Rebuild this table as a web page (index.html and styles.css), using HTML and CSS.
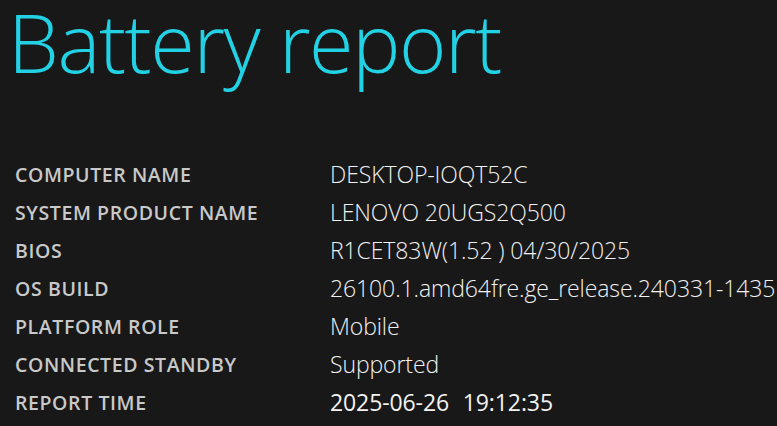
FILE: index.html
```html
<!DOCTYPE html>
<html lang="en">
<head>
    <meta charset="UTF-8">
    <meta name="viewport" content="width=device-width, initial-scale=1.0">
    <title>Battery report</title>
    <link rel="stylesheet" href="styles.css">
</head>
<body>
    <div class="report">
        <h1>Battery report</h1>

        <!-- System info -->
        <table class="info">
            <tr><td class="label">COMPUTER NAME</td><td class="value">DESKTOP-IOQT52C</td></tr>
            <tr><td class="label">SYSTEM PRODUCT NAME</td><td class="value">LENOVO 20UGS2Q500</td></tr>
            <tr><td class="label">BIOS</td><td class="value">R1CET83W(1.52 ) 04/30/2025</td></tr>
            <tr><td class="label">OS BUILD</td><td class="value">26100.1.amd64fre.ge_release.240331-1435</td></tr>
            <tr><td class="label">PLATFORM ROLE</td><td class="value">Mobile</td></tr>
            <tr><td class="label">CONNECTED STANDBY</td><td class="value">Supported</td></tr>
            <tr><td class="label">REPORT TIME</td><td class="value time">2025-06-26 &nbsp;19:12:35</td></tr>
        </table>
    </div>
</body>
</html>
```

FILE: styles.css
```css
body {
    margin: 0;
    background-color: #181818;
    color: #ffffff;
    font-family: 'Open Sans', 'Noto Sans', sans-serif;
    overflow: hidden;
}
.report {
    padding: 0 0 0 15px;
}
h1 {
    margin: 0 0 0 -7px;
    font-size: 81px;
    font-weight: 300;
    line-height: 84px;
    letter-spacing: -1.4px;
    color: #22d2e4;
}
.info {
    border-collapse: collapse;
    margin-top: 71px;
}
.info td {
    padding: 0;
    height: 38px;
    vertical-align: middle;
}
.label {
    width: 315px;
    font-size: 19.5px;
    font-weight: 600;
    letter-spacing: 0.6px;
    color: #c9c9c9;
}
.value {
    font-size: 23px;
    font-weight: 300;
    letter-spacing: -0.1px;
    color: #f2f2f2;
    white-space: nowrap;
}
.value.time {
    font-weight: 400;
    word-spacing: 1px;
}
```
